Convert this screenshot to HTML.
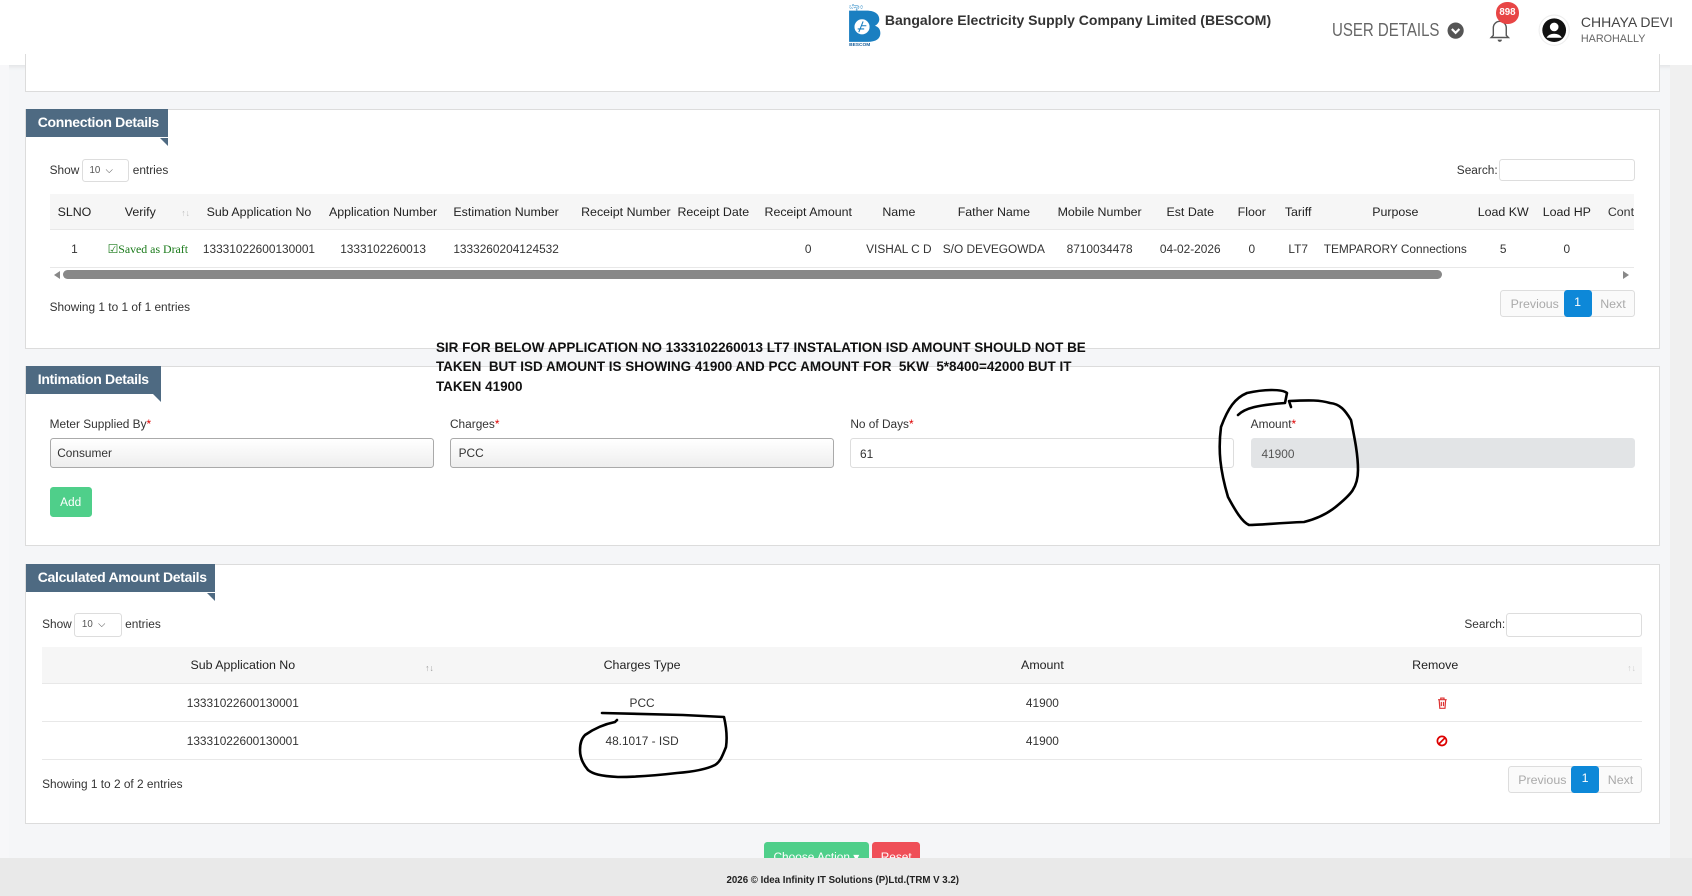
<!DOCTYPE html>
<html><head><meta charset="utf-8">
<style>
*{box-sizing:border-box;margin:0;padding:0}
html,body{width:1692px;height:896px;overflow:hidden;background:#f5f6f8;font-family:"Liberation Sans",sans-serif;color:#333}
#w{position:absolute;left:0;top:0;width:1568px;height:830px;zoom:1.0791;background:#f5f6f8}
.a{position:absolute;white-space:nowrap}
.panel{position:absolute;left:23px;width:1515px;background:#fff;border:1px solid #dcdcdc}
.tab{position:absolute;background:#4e6a82;color:#fff;font-weight:bold;font-size:13px;height:26px;line-height:25px;padding-left:11px;letter-spacing:-.3px}
.tab:after{content:"";position:absolute;right:0;bottom:-8px;border-top:8px solid #4e6a82;border-left:8px solid transparent}
.t{font-size:11px;color:#333}
.h{font-size:11.5px;color:#222}
.c{transform:translateX(-50%)}
.inp{position:absolute;border:1px solid #ccc;border-radius:3px;background:#fff}
.sel{position:absolute;border:1px solid #ddd;border-radius:3px;background:#fff;font-size:9px;color:#555;padding:5px 0 0 6px}
.pg{position:absolute;height:25px;border:1px solid #ddd;border-radius:3px;font-size:11.5px;color:#aaa;background:#fafafa}
.pg span{position:absolute;top:5px}
.pg b{position:absolute;top:-1px;height:25px;background:#0d88d8;color:#fff;font-weight:normal;text-align:center;line-height:24px;border-radius:3px}
</style></head><body>
<div id="w">
<div class="a" style="left:0;top:0;width:1568px;height:60px;background:#fff;box-shadow:0 2px 4px rgba(0,0,0,.08)"></div>
<div class="a" style="left:1548px;top:60px;width:20px;height:735px;background:#f0f0f0"></div>
<div class="a" style="left:0;top:60px;width:8px;height:735px;background:#f7f7f9"></div>
<svg class="a" style="left:786px;top:2px" width="32" height="42" viewBox="0 0 32 42">
<text x="1" y="6" font-size="6" fill="#1a7fc1" font-family="Noto Sans CJK SC,sans-serif">ಬೆಸ್ಕಾಂ</text>
<path d="M1 8h16c9 0 12 4 12 8 0 3-2 5-4 6 3 1 5 3 5 7 0 5-4 8-12 8H1z" fill="#1a7fc1"/>
<circle cx="13" cy="23" r="7" fill="#fff"/><path d="M10 28l4-10M12 22h5M9 25h6" stroke="#1a7fc1" stroke-width="1"/>
<text x="1" y="41" font-size="4.5" font-weight="bold" fill="#1a5f9a">BESCOM</text></svg>
<div class="a" style="left:820px;top:11px;font-size:13px;font-weight:bold;color:#333">Bangalore Electricity Supply Company Limited (BESCOM)</div>
<div class="a" style="left:1234px;top:18px;font-size:17px;color:#666;transform:scaleX(.82);transform-origin:left">USER DETAILS</div>
<svg class="a" style="left:1341px;top:20px" width="16" height="16"><circle cx="8" cy="8" r="7.5" fill="#555"/><path d="M4.5 6.5l3.5 3.5 3.5-3.5" stroke="#fff" stroke-width="2" fill="none"/></svg>
<svg class="a" style="left:1380px;top:16px" width="20" height="24"><path d="M4 17V10a6 6 0 0 1 12 0v7l2 2H2z" fill="none" stroke="#555" stroke-width="1.3"/><path d="M8 21a2 2 0 0 0 4 0" fill="#555"/></svg>
<div class="a" style="left:1386px;top:2px;width:22px;height:20px;border-radius:10px;background:#e84545;color:#fff;font-size:9px;font-weight:bold;text-align:center;line-height:20px">898</div>
<svg class="a" style="left:1425px;top:13px" width="30" height="30"><circle cx="15" cy="15" r="14" fill="#fff" stroke="#eee"/><circle cx="15" cy="15" r="11" fill="#111"/><circle cx="15" cy="12" r="4" fill="#fff"/><path d="M8 22c2-5 12-5 14 0" fill="#fff"/></svg>
<div class="a" style="left:1465px;top:13px;font-size:13px;color:#444">CHHAYA DEVI</div>
<div class="a" style="left:1465px;top:31px;font-size:10px;color:#666">HAROHALLY</div>

<div class="panel" style="top:50px;height:35px;border-top:none"></div>

<div class="panel" style="top:101px;height:222px"></div>
<div class="tab" style="left:24px;top:101px;width:132px">Connection Details</div>
<div class="a t" style="left:46px;top:151px">Show</div>
<div class="sel" style="left:76px;top:147px;width:44px;height:22px">10 &nbsp;⌵</div>
<div class="a t" style="left:123px;top:151px">entries</div>
<div class="a t" style="left:1350px;top:151px">Search:</div>
<div class="inp" style="left:1389px;top:147px;width:126px;height:21px;border-color:#ddd"></div>
<div class="a" style="left:46px;top:180px;width:1468px;height:33px;background:#f6f6f6;border-bottom:1px solid #e8e8e8"></div>
<div class="a" style="left:46px;top:247px;width:1468px;border-top:1px solid #e8e8e8"></div>
<div class="a h c" style="left:69px;top:190px">SLNO</div>
<div class="a h c" style="left:130px;top:190px">Verify</div>
<div class="a c" style="left:172px;top:193px;font-size:8px;color:#bbb">↑↓</div>
<div class="a h c" style="left:240px;top:190px">Sub Application No</div>
<div class="a h c" style="left:355px;top:190px">Application Number</div>
<div class="a h c" style="left:469px;top:190px">Estimation Number</div>
<div class="a h c" style="left:580px;top:190px">Receipt Number</div>
<div class="a h c" style="left:661px;top:190px">Receipt Date</div>
<div class="a h c" style="left:749px;top:190px">Receipt Amount</div>
<div class="a h c" style="left:833px;top:190px">Name</div>
<div class="a h c" style="left:921px;top:190px">Father Name</div>
<div class="a h c" style="left:1019px;top:190px">Mobile Number</div>
<div class="a h c" style="left:1103px;top:190px">Est Date</div>
<div class="a h c" style="left:1160px;top:190px">Floor</div>
<div class="a h c" style="left:1203px;top:190px">Tariff</div>
<div class="a h c" style="left:1293px;top:190px">Purpose</div>
<div class="a h c" style="left:1393px;top:190px">Load KW</div>
<div class="a h c" style="left:1452px;top:190px">Load HP</div>
<div class="a" style="left:1490px;top:190px;width:24px;overflow:hidden;font-size:11.5px">Contr</div>
<div class="a t c" style="left:69px;top:224px">1</div>
<div class="a c" style="left:137px;top:224px;font-size:11px;color:#1a7a1a;font-family:'Liberation Serif',serif">☑Saved as Draft</div>
<div class="a t c" style="left:240px;top:224px">13331022600130001</div>
<div class="a t c" style="left:355px;top:224px">1333102260013</div>
<div class="a t c" style="left:469px;top:224px">1333260204124532</div>
<div class="a t c" style="left:749px;top:224px">0</div>
<div class="a t c" style="left:833px;top:224px">VISHAL C D</div>
<div class="a t c" style="left:921px;top:224px">S/O DEVEGOWDA</div>
<div class="a t c" style="left:1019px;top:224px">8710034478</div>
<div class="a t c" style="left:1103px;top:224px">04-02-2026</div>
<div class="a t c" style="left:1160px;top:224px">0</div>
<div class="a t c" style="left:1203px;top:224px">LT7</div>
<div class="a t c" style="left:1293px;top:224px">TEMPARORY Connections</div>
<div class="a t c" style="left:1393px;top:224px">5</div>
<div class="a t c" style="left:1452px;top:224px">0</div>
<div class="a" style="left:50px;top:251px;border-right:6px solid #888;border-top:4px solid transparent;border-bottom:4px solid transparent"></div>
<div class="a" style="left:58px;top:250px;width:1278px;height:9px;background:#888;border-radius:5px"></div>
<div class="a" style="left:1504px;top:251px;border-left:6px solid #888;border-top:4px solid transparent;border-bottom:4px solid transparent"></div>
<div class="a t" style="left:46px;top:278px">Showing 1 to 1 of 1 entries</div>
<div class="pg" style="left:1390px;top:269px;width:125px"><span style="left:9px">Previous</span><b style="left:58px;width:26px">1</b><span style="left:92px">Next</span></div>

<div class="panel" style="top:339px;height:167px"></div>
<div class="tab" style="left:24px;top:339px;width:125px">Intimation Details</div>
<div class="a" style="left:404px;top:313px;font-size:12.5px;font-weight:bold;color:#111;line-height:18px;white-space:normal;width:620px">SIR FOR BELOW APPLICATION NO 1333102260013 LT7 INSTALATION ISD AMOUNT SHOULD NOT BE TAKEN &nbsp;BUT ISD AMOUNT IS SHOWING 41900 AND PCC AMOUNT FOR &nbsp;5KW &nbsp;5*8400=42000 BUT IT TAKEN 41900</div>
<div class="a t" style="left:46px;top:386px">Meter Supplied By<span style="color:#d00">*</span></div>
<div class="a t" style="left:417px;top:386px">Charges<span style="color:#d00">*</span></div>
<div class="a t" style="left:788px;top:386px">No of Days<span style="color:#d00">*</span></div>
<div class="a t" style="left:1159px;top:386px">Amount<span style="color:#d00">*</span></div>
<div class="inp" style="left:46px;top:406px;width:356px;height:28px;background:linear-gradient(#fff,#eee);border-color:#aaa"></div>
<div class="a t" style="left:53px;top:413px">Consumer</div>
<div class="inp" style="left:417px;top:406px;width:356px;height:28px;background:linear-gradient(#fff,#eee);border-color:#aaa"></div>
<div class="a t" style="left:425px;top:413px">PCC</div>
<div class="inp" style="left:788px;top:406px;width:356px;height:28px;border-color:#ddd"></div>
<div class="a t" style="left:797px;top:414px">61</div>
<div class="a" style="left:1159px;top:406px;width:356px;height:28px;background:#e2e4e6;border-radius:3px"></div>
<div class="a t" style="left:1169px;top:414px;color:#555">41900</div>
<div class="a" style="left:46px;top:451px;width:39px;height:28px;background:#4fcf8a;border-radius:3px;color:#fff;font-size:11px;text-align:center;line-height:28px">Add</div>

<div class="panel" style="top:523px;height:241px"></div>
<div class="tab" style="left:24px;top:523px;width:175px">Calculated Amount Details</div>
<div class="a t" style="left:39px;top:572px">Show</div>
<div class="sel" style="left:69px;top:568px;width:44px;height:22px">10 &nbsp;⌵</div>
<div class="a t" style="left:116px;top:572px">entries</div>
<div class="a t" style="left:1357px;top:572px">Search:</div>
<div class="inp" style="left:1396px;top:568px;width:126px;height:22px;border-color:#ddd"></div>
<div class="a" style="left:39px;top:600px;width:1483px;height:34px;background:#f6f6f6;border-bottom:1px solid #e8e8e8"></div>
<div class="a" style="left:39px;top:668px;width:1483px;border-top:1px solid #e8e8e8"></div>
<div class="a" style="left:39px;top:703px;width:1483px;border-top:1px solid #e8e8e8"></div>
<div class="a h c" style="left:225px;top:610px">Sub Application No</div>
<div class="a c" style="left:398px;top:614px;font-size:8px;color:#999">↑↓</div>
<div class="a h c" style="left:595px;top:610px">Charges Type</div>
<div class="a h c" style="left:966px;top:610px">Amount</div>
<div class="a h c" style="left:1330px;top:610px">Remove</div>
<div class="a c" style="left:1512px;top:614px;font-size:8px;color:#ccc">↑↓</div>
<div class="a t c" style="left:225px;top:645px">13331022600130001</div>
<div class="a t c" style="left:595px;top:645px">PCC</div>
<div class="a t c" style="left:966px;top:645px">41900</div>
<svg class="a" style="left:1332px;top:646px" width="10" height="11"><path d="M1 2.5h8M3.5 2.5V1h3v1.5M2 2.5l.6 8h4.8l.6-8M4 4.5v4M6 4.5v4" stroke="#d33" stroke-width="1.1" fill="none"/></svg>
<div class="a t c" style="left:225px;top:680px">13331022600130001</div>
<div class="a t c" style="left:595px;top:680px">48.1017 - ISD</div>
<div class="a t c" style="left:966px;top:680px">41900</div>
<svg class="a" style="left:1331px;top:681px" width="11" height="11"><circle cx="5.5" cy="5.5" r="4.2" stroke="#d00" stroke-width="1.6" fill="none"/><path d="M2.5 8.5l6-6" stroke="#d00" stroke-width="1.6"/></svg>
<div class="a t" style="left:39px;top:720px">Showing 1 to 2 of 2 entries</div>
<div class="pg" style="left:1397px;top:710px;width:125px"><span style="left:9px">Previous</span><b style="left:58px;width:26px">1</b><span style="left:92px">Next</span></div>

<div class="a" style="left:708px;top:780px;width:97px;height:25px;background:#4fcf8a;border-radius:3px;color:#fff;font-size:11px;text-align:center;padding-top:8px">Choose Action ▾</div>
<div class="a" style="left:808px;top:780px;width:45px;height:25px;background:#ef4f58;border-radius:3px;color:#fff;font-size:11px;text-align:center;padding-top:8px">Reset</div>
<div class="a" style="left:0;top:795px;width:1568px;height:35px;background:#e9e9e9"></div>
<div class="a c" style="left:781px;top:811px;font-size:9px;font-weight:bold;color:#222">2026 © Idea Infinity IT Solutions (P)Ltd.(TRM V 3.2)</div>
</div>
<svg style="position:absolute;left:0;top:0" width="1692" height="896">
<path d="M1238 415 C1245 408 1258 405 1285 403 L1287 393 C1282 389 1265 389 1247 393 C1235 398 1228 408 1221 427 C1218 450 1220 470 1228 497 C1235 510 1242 522 1249 525 C1260 525 1277 523 1304 522 C1320 518 1330 512 1338 505 C1350 495 1358 488 1358 470 C1358 455 1355 440 1351 420 C1345 410 1340 404 1330 403 C1320 400 1310 400 1289 401 L1291 407" stroke="#000" stroke-width="2.6" fill="none" stroke-linejoin="round" stroke-linecap="round"/>
<path d="M602 713 L683 715 L724 717 C727 730 727 740 726 747 C722 757 720 762 715 765 C705 770 690 772 677 773 C660 775 640 777 618 777 C600 776 593 774 588 770 C582 763 580 757 580 750 C580 743 582 738 585 735 C595 728 605 724 615 722 L617 720" stroke="#000" stroke-width="2.6" fill="none" stroke-linejoin="round" stroke-linecap="round"/>
</svg>
</body></html>
